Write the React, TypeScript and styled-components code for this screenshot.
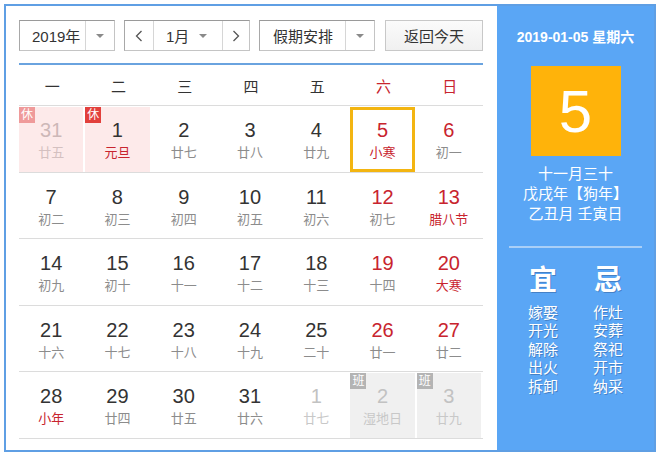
import React from "react";
import styled, { createGlobalStyle } from "styled-components";

const Global = createGlobalStyle`
  html, body { margin: 0; padding: 0; background: #ffffff; }
  body { font-family: "Liberation Sans", "Noto Sans CJK SC", sans-serif; }
  * { box-sizing: border-box; }
`;

const RED = "#c8242e";

const Frame = styled.div`
  margin: 4px 0 0 4px;
  width: 652px;
  height: 448px;
  border: 2px solid #5f9fe4;
  display: flex;
`;

const Left = styled.div`
  width: 491px;
  padding: 14px 14px 0 13px;
  background: #fff;
`;

const Toolbar = styled.div`
  display: flex;
  height: 31px;
  align-items: stretch;
`;

const Box = styled.div<{ w: number; ml?: number }>`
  width: ${(p) => p.w}px;
  margin-left: ${(p) => p.ml ?? 0}px;
  border: 1px solid #c4c4c4;
  border-top-color: #9a9a9a;
  border-left-color: #a8a8a8;
  display: flex;
  background: #fff;
  font-size: 15px;
  color: #333;
`;

const Seg = styled.div<{ w?: number; grow?: boolean; sep?: boolean }>`
  ${(p) => (p.grow ? "flex: 1;" : `width: ${p.w}px;`)}
  display: flex;
  align-items: center;
  justify-content: ${(p) => (p.grow ? "flex-start" : "center")};
  padding-left: ${(p) => (p.grow ? 12 : 0)}px;
  border-left: ${(p) => (p.sep ? "1px solid #d6d6d6" : "none")};
  white-space: nowrap;
`;

const Caret = styled.span`
  width: 0;
  height: 0;
  border-left: 4px solid transparent;
  border-right: 4px solid transparent;
  border-top: 4px solid #8a8a8a;
`;

const Button = styled.div`
  width: 98px;
  margin-left: 10px;
  border: 1px solid #c8c8c8;
  background: linear-gradient(#fbfbfb, #f0f0f0);
  display: flex;
  align-items: center;
  justify-content: center;
  font-size: 15px;
  color: #333;
`;

const BlueLine = styled.div`
  margin-top: 12px;
  height: 2px;
  background: #6aa3df;
`;

const Header = styled.div`
  display: grid;
  grid-template-columns: repeat(7, 1fr);
  height: 41px;
  border-bottom: 1px solid #dcdcdc;
`;

const WeekDay = styled.div<{ red?: boolean }>`
  display: flex;
  align-items: center;
  justify-content: center;
  font-size: 15px;
  color: ${(p) => (p.red ? RED : "#333")};
`;

const Row = styled.div`
  display: grid;
  grid-template-columns: repeat(7, 1fr);
  height: 66.6px;
  border-bottom: 1px solid #dcdcdc;
`;

const Cell = styled.div<{ bg?: string; selected?: boolean }>`
  position: relative;
  margin: 1px 2px 0 0;
  background: ${(p) => p.bg ?? "transparent"};
  border: ${(p) => (p.selected ? "3px solid #f3b511" : "3px solid transparent")};
  display: flex;
  flex-direction: column;
  align-items: center;
  padding-top: 9px;
`;

const Num = styled.div<{ color: string }>`
  font-size: 20px;
  line-height: 22px;
  color: ${(p) => p.color};
`;

const Lunar = styled.div<{ color: string }>`
  margin-top: 2px;
  font-size: 13px;
  line-height: 20px;
  color: ${(p) => p.color};
`;

const Badge = styled.div<{ bg: string }>`
  position: absolute;
  top: -3px;
  left: -3px;
  width: 16px;
  height: 16px;
  background: ${(p) => p.bg};
  color: #fff;
  font-size: 12px;
  line-height: 16px;
  text-align: center;
`;

const Right = styled.div`
  flex: 1;
  background: #5aa6f5;
  color: #fff;
  display: flex;
  flex-direction: column;
  align-items: center;
  padding-top: 21px;
`;

const DateText = styled.div`
  font-size: 14px;
  line-height: 20px;
  font-weight: bold;
  white-space: nowrap;
`;

const BigDay = styled.div`
  margin-top: 19px;
  width: 90px;
  height: 90px;
  background: #ffb30a;
  display: flex;
  align-items: center;
  justify-content: center;
  font-size: 60px;
  color: #fff;
`;

const Info = styled.div`
  margin-top: 8px;
  font-size: 15px;
  line-height: 20px;
  text-align: center;
  white-space: nowrap;
`;

const Divider = styled.div`
  margin-top: 22px;
  width: 133px;
  height: 2px;
  background: #a9cff7;
`;

const Cols = styled.div`
  margin-top: 17px;
  display: flex;
  gap: 35px;
`;

const Col = styled.div`
  display: flex;
  flex-direction: column;
  align-items: center;
  text-shadow: 1px 1px 0 rgba(30, 60, 110, 0.35);
`;

const Head = styled.div`
  font-size: 28px;
  line-height: 32px;
  font-weight: bold;
`;

const Items = styled.div`
  margin-top: 7px;
  font-size: 15px;
  line-height: 18.4px;
  text-align: center;
`;

type Day = {
  n: number;
  l: string;
  red?: boolean;
  lred?: boolean;
  out?: boolean;
  badge?: "休" | "班";
  sel?: boolean;
};

const rows: Day[][] = [
  [
    { n: 31, l: "廿五", out: true, badge: "休" },
    { n: 1, l: "元旦", lred: true, badge: "休" },
    { n: 2, l: "廿七" },
    { n: 3, l: "廿八" },
    { n: 4, l: "廿九" },
    { n: 5, l: "小寒", red: true, lred: true, sel: true },
    { n: 6, l: "初一", red: true },
  ],
  [
    { n: 7, l: "初二" },
    { n: 8, l: "初三" },
    { n: 9, l: "初四" },
    { n: 10, l: "初五" },
    { n: 11, l: "初六" },
    { n: 12, l: "初七", red: true },
    { n: 13, l: "腊八节", red: true, lred: true },
  ],
  [
    { n: 14, l: "初九" },
    { n: 15, l: "初十" },
    { n: 16, l: "十一" },
    { n: 17, l: "十二" },
    { n: 18, l: "十三" },
    { n: 19, l: "十四", red: true },
    { n: 20, l: "大寒", red: true, lred: true },
  ],
  [
    { n: 21, l: "十六" },
    { n: 22, l: "十七" },
    { n: 23, l: "十八" },
    { n: 24, l: "十九" },
    { n: 25, l: "二十" },
    { n: 26, l: "廿一", red: true },
    { n: 27, l: "廿二", red: true },
  ],
  [
    { n: 28, l: "小年", lred: true },
    { n: 29, l: "廿四" },
    { n: 30, l: "廿五" },
    { n: 31, l: "廿六" },
    { n: 1, l: "廿七", out: true },
    { n: 2, l: "湿地日", out: true, badge: "班" },
    { n: 3, l: "廿九", out: true, badge: "班" },
  ],
];

function DayCell({ d }: { d: Day }) {
  let bg: string | undefined;
  if (d.badge === "休") bg = "#fdeaea";
  if (d.badge === "班") bg = "#f0f0f0";
  const numColor = d.out ? (d.badge === "休" ? "#cdb8b8" : "#c2c2c2") : d.red ? RED : "#333";
  const lColor = d.out ? (d.badge === "休" ? "#d4c0c0" : "#c8c8c8") : d.lred ? RED : "#8c8c8c";
  const badgeBg = d.badge === "休" ? (d.out ? "#ef9a9a" : "#e2403c") : "#b4b4b4";
  return (
    <Cell bg={bg} selected={d.sel}>
      {d.badge && <Badge bg={badgeBg}>{d.badge}</Badge>}
      <Num color={numColor}>{d.n}</Num>
      <Lunar color={lColor}>{d.l}</Lunar>
    </Cell>
  );
}

export default function App() {
  const week = ["一", "二", "三", "四", "五", "六", "日"];
  return (
    <>
      <Global />
      <Frame>
        <Left>
          <Toolbar>
            <Box w={96}>
              <Seg grow>2019年</Seg>
              <Seg w={29} sep>
                <Caret />
              </Seg>
            </Box>
            <Box w={126} ml={9}>
              <Seg w={28}>
                <svg width="8" height="12" viewBox="0 0 8 12">
                  <path d="M6.5 1 L1.5 6 L6.5 11" stroke="#555" strokeWidth="1.3" fill="none" />
                </svg>
              </Seg>
              <Seg grow sep>
                1月
              </Seg>
              <Seg w={14} style={{ marginRight: 12 }}>
                <Caret />
              </Seg>
              <Seg w={27} sep>
                <svg width="8" height="12" viewBox="0 0 8 12">
                  <path d="M1.5 1 L6.5 6 L1.5 11" stroke="#555" strokeWidth="1.3" fill="none" />
                </svg>
              </Seg>
            </Box>
            <Box w={116} ml={9}>
              <Seg grow style={{ paddingLeft: 13 }}>
                假期安排
              </Seg>
              <Seg w={29} sep>
                <Caret />
              </Seg>
            </Box>
            <Button>返回今天</Button>
          </Toolbar>
          <BlueLine />
          <Header>
            {week.map((w, i) => (
              <WeekDay key={w} red={i >= 5}>
                {w}
              </WeekDay>
            ))}
          </Header>
          {rows.map((r, i) => (
            <Row key={i}>
              {r.map((d, j) => (
                <DayCell key={j} d={d} />
              ))}
            </Row>
          ))}
        </Left>
        <Right>
          <DateText>2019-01-05 星期六</DateText>
          <BigDay>5</BigDay>
          <Info>
            十一月三十
            <br />
            戊戌年【狗年】
            <br />
            乙丑月 壬寅日
          </Info>
          <Divider />
          <Cols>
            <Col>
              <Head>宜</Head>
              <Items>
                嫁娶
                <br />
                开光
                <br />
                解除
                <br />
                出火
                <br />
                拆卸
              </Items>
            </Col>
            <Col>
              <Head>忌</Head>
              <Items>
                作灶
                <br />
                安葬
                <br />
                祭祀
                <br />
                开市
                <br />
                纳采
              </Items>
            </Col>
          </Cols>
        </Right>
      </Frame>
    </>
  );
}
